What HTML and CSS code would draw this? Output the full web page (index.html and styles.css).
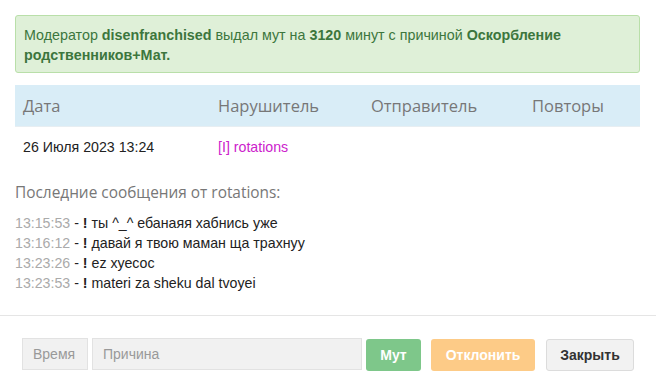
FILE: index.html
```html
<!DOCTYPE html>
<html>
<head>
<meta charset="utf-8">
<link rel="stylesheet" href="styles.css">
</head>
<body>
<div class="modal">
  <div class="content">
    <div class="alert">Модератор <b>disenfranchised</b> выдал мут на <b>3120</b> минут с причиной <b>Оскорбление родственников+Мат.</b></div>
    <div class="table">
      <div class="thead">
        <div class="c c1">Дата</div>
        <div class="c c2">Нарушитель</div>
        <div class="c c3">Отправитель</div>
        <div class="c c4">Повторы</div>
      </div>
      <div class="trow">
        <div class="c c1">26 Июля 2023 13:24</div>
        <div class="c c2"><span class="nick">[I] rotations</span></div>
        <div class="c c3"></div>
        <div class="c c4"></div>
      </div>
    </div>
    <div class="last-title">Последние сообщения от rotations:</div>
    <div class="msgs">
      <div class="msg"><span class="time">13:15:53</span> - <b>!</b> ты ^_^ ебанаяя хабнись уже</div>
      <div class="msg"><span class="time">13:16:12</span> - <b>!</b> давай я твою маман ща трахнуу</div>
      <div class="msg"><span class="time">13:23:26</span> - <b>!</b> ez хуесос</div>
      <div class="msg"><span class="time">13:23:53</span> - <b>!</b> materi za sheku dal tvoyei</div>
    </div>
  </div>
  <div class="footer">
    <div class="field time-field">Время</div>
    <div class="field reason-field">Причина</div>
    <div class="btn btn-mute">Мут</div>
    <div class="btn btn-decline">Отклонить</div>
    <div class="btn btn-close">Закрыть</div>
  </div>
</div>
</body>
</html>
```
FILE: styles.css
```css
* { box-sizing: border-box; }
html, body { margin: 0; padding: 0; background: #fff; }
body { font-family: "Liberation Sans", Arial, sans-serif; font-size: 14px; color: #333; width: 656px; height: 392px; overflow: hidden; }
.content { padding: 15px 16px 0 15px; height: 316px; border-bottom: 1px solid #e5e5e5; }
.alert {
  background: #dff0d8; border: 1px solid #b9dfa9; border-radius: 3px; color: #3c763d;
  padding: 9px 8px 8px 8px; line-height: 20px; font-size: 14.3px; height: 58px;
}
.alert b { font-weight: bold; }
.table { margin-top: 12px; }
.thead { display: flex; background: #d9edf7; height: 42px; align-items: center; border-bottom: 1px solid #e7eef2; font-family: "Open Sans", sans-serif; font-size: 16.5px; color: #777; }
.trow { display: flex; height: 40px; align-items: center; }
.c1 { width: 203px; padding-left: 8px; }
.c2 { width: 153px; }
.c3 { width: 161px; }
.c4 { flex: 1; }
.trow .c { font-size: 14.2px; color: #222; }
.nick { color: #cc22cc; }
.last-title { margin-top: 16px; font-family: "Open Sans", sans-serif; font-size: 15.4px; color: #777; line-height: 20px; }
.msgs { margin-top: 10px; }
.msg { line-height: 20px; color: #222; font-size: 14.2px; }
.time { color: #aaa; }
.footer { display: flex; align-items: center; padding: 20px 0 0 22px; }
.field { height: 32px; background: #f1f1f1; border: 1px solid #e2e2e2; color: #999; font-size: 14px; line-height: 30px; padding: 0 10px; }
.time-field { width: 66px; }
.reason-field { width: 270px; margin-left: 4px; }
.btn { height: 32px; line-height: 32px; border-radius: 3px; font-weight: bold; font-size: 14px; text-align: center; margin-top: 3px; }
.btn-mute { width: 55px; margin-left: 4px; background: #7ec78a; color: #fff; }
.btn-decline { width: 104px; margin-left: 10px; background: #fdcb87; color: #fff; }
.btn-close { width: 88px; margin-left: 11px; background: #f2f2f2; border: 1px solid #dcdcdc; color: #333; line-height: 30px; }
```
